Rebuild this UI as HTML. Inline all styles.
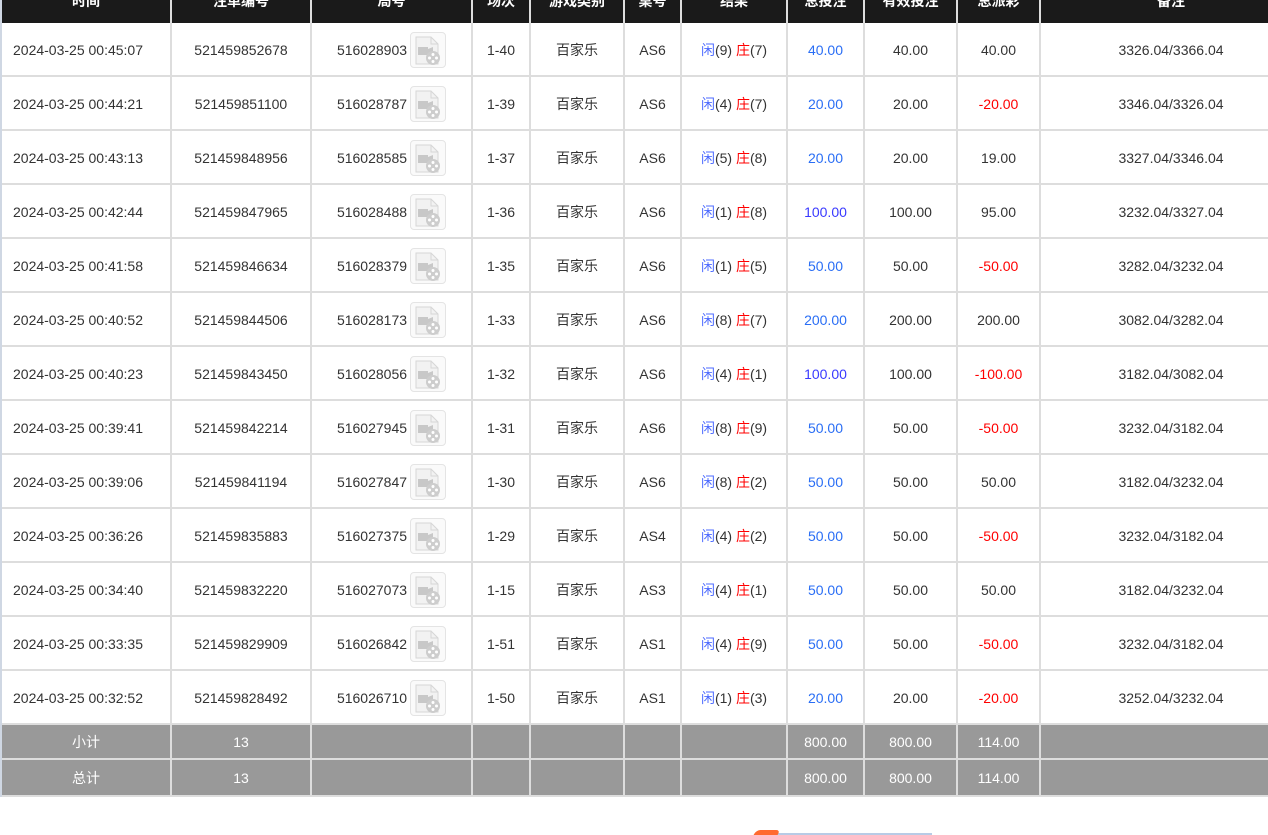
<!DOCTYPE html>
<html><head><meta charset="utf-8">
<style>
*{box-sizing:border-box;margin:0;padding:0}
body{width:1268px;height:835px;background:#fff;overflow:hidden;font-family:"Liberation Sans","Noto Sans CJK SC",sans-serif;font-size:14px;color:#333;position:relative}
.g{display:grid;grid-template-columns:170px 140px 161px 58px 94px 57px 106px 77px 93px 83px 262px;width:1303px;border-left:2px solid #cfd7e3}
.g>div{display:flex;align-items:center;justify-content:center;border-right:2px solid #ddd;border-bottom:2px solid #ddd;height:54px;white-space:nowrap;padding-top:1px}
.g>div.h{height:23px;background:#1a1a1a;color:#fff;font-weight:bold;border-bottom:none;border-right-color:#ddd;align-items:flex-start;line-height:12px;font-size:14px;padding-top:0;overflow:hidden}
.g>div.h span{margin-top:-5px}
.g>div.s{height:35px;background:#999;color:#fff}
.g>div.t{height:37px;background:#999;color:#fff}
.g>div.l{justify-content:flex-start;padding-left:11px}
.b{color:#2a6ef5}.p{color:#3a3aff}.r{color:#f00}.x{color:#4d6bff}
.ic{width:36px;height:36px;border:1px solid #e4e4e4;border-radius:4px;margin-left:3px;display:inline-flex;align-items:center;justify-content:center;background:#fafafa}
</style></head><body>
<div class="g">
<div class="h"><span>时间</span></div><div class="h"><span>注单编号</span></div><div class="h"><span>局号</span></div><div class="h"><span>场次</span></div><div class="h"><span>游戏类别</span></div><div class="h"><span>桌号</span></div><div class="h"><span>结果</span></div><div class="h"><span>总投注</span></div><div class="h"><span>有效投注</span></div><div class="h"><span>总派彩</span></div><div class="h"><span>备注</span></div>
</div>
<svg width="0" height="0" style="position:absolute"><defs><symbol id="v" viewBox="0 0 34 34"><path d="M5 4h15l7 7v20H5z" fill="#f2f2f2" stroke="#d6d6d6"/><path d="M20 4v7h7" fill="none" stroke="#d6d6d6"/><rect x="7" y="14" width="10" height="8" fill="#c8c8c8"/><path d="M17 16l5-2v8l-5-2z" fill="#c8c8c8"/><circle cx="22" cy="25" r="7" fill="#cdcdcd"/><circle cx="22" cy="21.5" r="1.5" fill="#fff"/><circle cx="22" cy="28.5" r="1.5" fill="#fff"/><circle cx="18.5" cy="25" r="1.5" fill="#fff"/><circle cx="25.5" cy="25" r="1.5" fill="#fff"/></symbol></defs></svg>
<div class="g" id="rows">
<div class="l">2024-03-25 00:45:07</div><div>521459852678</div><div>516028903<span class="ic"><svg width="34" height="34"><use href="#v"/></svg></span></div><div>1-40</div><div>百家乐</div><div>AS6</div><div><span class="x">闲</span>(9)&nbsp;<span class="r">庄</span>(7)</div><div class="b">40.00</div><div>40.00</div><div>40.00</div><div>3326.04/3366.04</div>
<div class="l">2024-03-25 00:44:21</div><div>521459851100</div><div>516028787<span class="ic"><svg width="34" height="34"><use href="#v"/></svg></span></div><div>1-39</div><div>百家乐</div><div>AS6</div><div><span class="x">闲</span>(4)&nbsp;<span class="r">庄</span>(7)</div><div class="b">20.00</div><div>20.00</div><div class="r">-20.00</div><div>3346.04/3326.04</div>
<div class="l">2024-03-25 00:43:13</div><div>521459848956</div><div>516028585<span class="ic"><svg width="34" height="34"><use href="#v"/></svg></span></div><div>1-37</div><div>百家乐</div><div>AS6</div><div><span class="x">闲</span>(5)&nbsp;<span class="r">庄</span>(8)</div><div class="b">20.00</div><div>20.00</div><div>19.00</div><div>3327.04/3346.04</div>
<div class="l">2024-03-25 00:42:44</div><div>521459847965</div><div>516028488<span class="ic"><svg width="34" height="34"><use href="#v"/></svg></span></div><div>1-36</div><div>百家乐</div><div>AS6</div><div><span class="x">闲</span>(1)&nbsp;<span class="r">庄</span>(8)</div><div class="p">100.00</div><div>100.00</div><div>95.00</div><div>3232.04/3327.04</div>
<div class="l">2024-03-25 00:41:58</div><div>521459846634</div><div>516028379<span class="ic"><svg width="34" height="34"><use href="#v"/></svg></span></div><div>1-35</div><div>百家乐</div><div>AS6</div><div><span class="x">闲</span>(1)&nbsp;<span class="r">庄</span>(5)</div><div class="b">50.00</div><div>50.00</div><div class="r">-50.00</div><div>3282.04/3232.04</div>
<div class="l">2024-03-25 00:40:52</div><div>521459844506</div><div>516028173<span class="ic"><svg width="34" height="34"><use href="#v"/></svg></span></div><div>1-33</div><div>百家乐</div><div>AS6</div><div><span class="x">闲</span>(8)&nbsp;<span class="r">庄</span>(7)</div><div class="b">200.00</div><div>200.00</div><div>200.00</div><div>3082.04/3282.04</div>
<div class="l">2024-03-25 00:40:23</div><div>521459843450</div><div>516028056<span class="ic"><svg width="34" height="34"><use href="#v"/></svg></span></div><div>1-32</div><div>百家乐</div><div>AS6</div><div><span class="x">闲</span>(4)&nbsp;<span class="r">庄</span>(1)</div><div class="p">100.00</div><div>100.00</div><div class="r">-100.00</div><div>3182.04/3082.04</div>
<div class="l">2024-03-25 00:39:41</div><div>521459842214</div><div>516027945<span class="ic"><svg width="34" height="34"><use href="#v"/></svg></span></div><div>1-31</div><div>百家乐</div><div>AS6</div><div><span class="x">闲</span>(8)&nbsp;<span class="r">庄</span>(9)</div><div class="b">50.00</div><div>50.00</div><div class="r">-50.00</div><div>3232.04/3182.04</div>
<div class="l">2024-03-25 00:39:06</div><div>521459841194</div><div>516027847<span class="ic"><svg width="34" height="34"><use href="#v"/></svg></span></div><div>1-30</div><div>百家乐</div><div>AS6</div><div><span class="x">闲</span>(8)&nbsp;<span class="r">庄</span>(2)</div><div class="b">50.00</div><div>50.00</div><div>50.00</div><div>3182.04/3232.04</div>
<div class="l">2024-03-25 00:36:26</div><div>521459835883</div><div>516027375<span class="ic"><svg width="34" height="34"><use href="#v"/></svg></span></div><div>1-29</div><div>百家乐</div><div>AS4</div><div><span class="x">闲</span>(4)&nbsp;<span class="r">庄</span>(2)</div><div class="b">50.00</div><div>50.00</div><div class="r">-50.00</div><div>3232.04/3182.04</div>
<div class="l">2024-03-25 00:34:40</div><div>521459832220</div><div>516027073<span class="ic"><svg width="34" height="34"><use href="#v"/></svg></span></div><div>1-15</div><div>百家乐</div><div>AS3</div><div><span class="x">闲</span>(4)&nbsp;<span class="r">庄</span>(1)</div><div class="b">50.00</div><div>50.00</div><div>50.00</div><div>3182.04/3232.04</div>
<div class="l">2024-03-25 00:33:35</div><div>521459829909</div><div>516026842<span class="ic"><svg width="34" height="34"><use href="#v"/></svg></span></div><div>1-51</div><div>百家乐</div><div>AS1</div><div><span class="x">闲</span>(4)&nbsp;<span class="r">庄</span>(9)</div><div class="b">50.00</div><div>50.00</div><div class="r">-50.00</div><div>3232.04/3182.04</div>
<div class="l">2024-03-25 00:32:52</div><div>521459828492</div><div>516026710<span class="ic"><svg width="34" height="34"><use href="#v"/></svg></span></div><div>1-50</div><div>百家乐</div><div>AS1</div><div><span class="x">闲</span>(1)&nbsp;<span class="r">庄</span>(3)</div><div class="b">20.00</div><div>20.00</div><div class="r">-20.00</div><div>3252.04/3232.04</div>
<div class="s">小计</div><div class="s">13</div><div class="s"></div><div class="s"></div><div class="s"></div><div class="s"></div><div class="s"></div><div class="s">800.00</div><div class="s">800.00</div><div class="s">114.00</div><div class="s"></div>
<div class="t">总计</div><div class="t">13</div><div class="t"></div><div class="t"></div><div class="t"></div><div class="t"></div><div class="t"></div><div class="t">800.00</div><div class="t">800.00</div><div class="t">114.00</div><div class="t"></div>
</div>
<div style="position:absolute;left:776px;top:833px;width:156px;height:2px;background:#b8cbe6"></div>
<div style="position:absolute;left:755px;top:830px;width:24px;height:5px;background:#ff6a30;border-radius:4px 4px 0 0;transform:skewX(-30deg)"></div>
</body></html>
